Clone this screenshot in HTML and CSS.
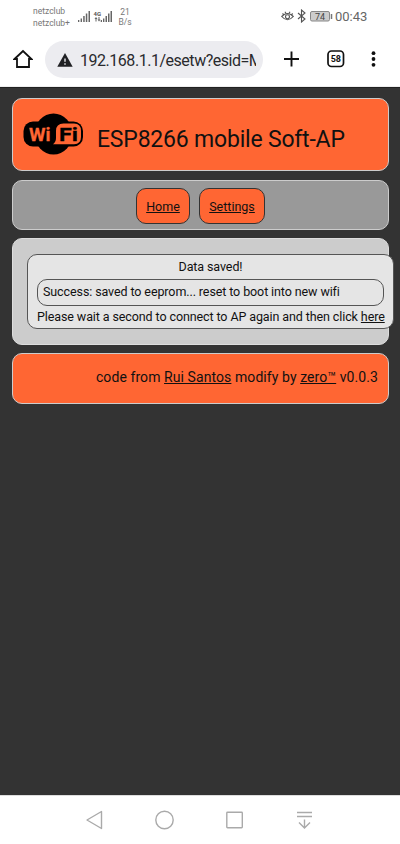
FILE: index.html
```html
<!DOCTYPE html>
<html lang="en">
<head>
<meta charset="utf-8">
<title>ESP8266 mobile Soft-AP</title>
<link rel="stylesheet" href="styles.css">
</head>
<body>
<div class="status">
  <div class="carrier"><span>netzclub</span><span>netzclub+</span></div>
  <svg class="signal" width="36" height="14" viewBox="0 0 36 14">
    <g fill="#666"><path d="M0 11h1.3v2H0zM2.6 9.5h1.4V13H2.6zM5.200 7h1.500v6H5.200zM7.800 4.500h1.500V13H7.800zM10.500 2H12v11h-1.500zM22.700 11H24v2h-1.300zM25 9.500h1.400V13H25zM27.500 7H29v6h-1.500zM30 4.500h1.500V13H30zM32.500 2H34v11h-1.500z"/><path d="M18 8l-1.500 2h1v2.500h1V10h1zM21 12.500l-1.500-2h1V8h1v2.500h1z"/></g>
    <text class="net" x="15.500" y="6.500">4G</text>
  </svg>
  <div class="rate"><span>21</span><span>B/s</span></div>
  <svg class="symbols" width="52" height="14" viewBox="0 0 52 14">
    <g fill="none" stroke="#555" stroke-width="1.100"><path d="M.7 7.500Q6.500 1.500 12.300 7.500Q6.500 14 .7 7.500zM1.500 4.500L3 6M4 2.700L5 4.500M9 2.700L8 4.500M11.700 4.500L10.300 6"/><circle cx="6.500" cy="7.700" r="2"/><path d="M17 4L24 10L20.500 13V1L24 4L17 10"/></g>
    <rect x="29.500" y="2.500" width="19" height="9.500" rx="1.500" fill="#ccc" stroke="#888"/>
    <path d="M50.500 5v5" stroke="#777" stroke-width="1.500"/>
    <text class="charge" x="34" y="10.500">74</text>
  </svg>
  <span class="clock">00:43</span>
</div>
<div class="toolbar">
  <svg class="home" width="20" height="20" viewBox="0 0 20 20"><path d="M1.500 10L10 2L18.500 10H16V18H4V10z" fill="none" stroke="#111" stroke-width="1.800"/></svg>
  <div class="address">
    <svg width="16" height="14" viewBox="0 0 16 14"><path d="M8 0L15.700 13.700H.3z" fill="#202124"/><path d="M8 5.500v3.200M8 10.200v1.600" stroke="#ececf0" stroke-width="1.400"/></svg>
    <span class="url">192.168.1.1/esetw?esid=M</span>
  </div>
  <svg class="actions" width="96" height="20" viewBox="0 0 96 20">
    <path d="M1 10H16M8.500 2.500V17.500" stroke="#111" stroke-width="1.900"/>
    <rect x="45" y="2" width="15.500" height="15.500" rx="3.500" fill="none" stroke="#111" stroke-width="1.700"/>
    <text class="tabs" x="52.800" y="13">58</text>
    <g fill="#111"><circle cx="90.500" cy="4.200" r="1.900"/><circle cx="90.500" cy="10" r="1.900"/><circle cx="90.500" cy="15.800" r="1.900"/></g>
  </svg>
</div>
<main class="page">
  <header class="panel banner">
    <svg class="logo" width="61" height="43" viewBox="0 0 61 43">
      <ellipse cx="30.500" cy="21" rx="19" ry="20.500"/>
      <rect x=".5" y="8.500" width="59.500" height="25" rx="9.500"/>
      <path d="M30 31.300Q33 29 33 25V18Q33 10.500 40.500 10.500H51Q58 10.500 58 18V24Q58 31.300 51 31.300z" fill="#ff6633"/>
      <text class="wi" x="6" y="27.700" textLength="21.500" lengthAdjust="spacingAndGlyphs">Wi</text>
      <text class="fi" x="36" y="28" textLength="19" lengthAdjust="spacingAndGlyphs">Fi</text>
    </svg>
    <h1>ESP8266 mobile Soft-AP</h1>
  </header>
  <nav class="panel menu"><a class="button">Home</a><a class="button settings">Settings</a></nav>
  <section class="panel content">
    <div class="notice">
      <p class="heading">Data saved!</p>
      <p class="result">Success: saved to eeprom... reset to boot into new wifi</p>
      <p class="wait">Please wait a second to connect to AP again and then click <u>here</u></p>
    </div>
  </section>
  <footer class="panel footer">code from <u>Rui Santos</u> modify by <u>zero™</u> v0.0.3</footer>
</main>
<div class="navigation">
  <svg width="230" height="22" viewBox="0 0 230 22"><g fill="none" stroke="#aaa" stroke-width="1.400"><path d="M2 11L16.500 2.500V19.500z" stroke-linejoin="round"/><circle cx="79.500" cy="11" r="8.700"/><rect x="141.800" y="3.300" width="15.500" height="15.500" rx=".7"/><path d="M212 3.500h15M212 7.500h15M219.500 10.500v8.500M214 13.500l5.500 5.500 5.500-5.500"/></g></svg>
</div>
</body>
</html>
```
FILE: styles.css
```css
* { box-sizing: border-box; }
body { margin: 0; width: 400px; height: 844px; overflow: hidden; display: flex; flex-direction: column; background: #fff; font-family: Roboto, sans-serif; color: #111; }
.status { height: 38px; display: flex; align-items: flex-start; color: #777; }
.carrier { width: 45px; margin: 5px 0 0 33px; display: flex; flex-direction: column; font-size: 8.5px; line-height: 12px; white-space: nowrap; }
.signal { margin-top: 9px; }
.net { font: bold 6px Roboto, sans-serif; fill: #555; }
.rate { width: 22px; margin: 7px 0 0 0; display: flex; flex-direction: column; text-align: center; font-size: 8.5px; line-height: 10px; }
.symbols { margin: 9px 0 0 145px; }
.charge { font: 9px Roboto, sans-serif; fill: #444; }
.clock { margin: 8px 0 0 2px; font-size: 13px; line-height: 18px; color: #666; }
.toolbar { height: 49px; padding: 3px 0 9px 13px; display: flex; align-items: center; border-bottom: 1px solid #eee; }
.address { width: 218px; height: 37px; margin-left: 12px; padding: 2px 7px 0 12px; border-radius: 19px; background: #ececf0; display: flex; align-items: center; }
.address svg { flex: none; }
.url { width: 176px; margin-left: 7px; overflow: hidden; white-space: nowrap; font-size: 16px; letter-spacing: -0.47px; color: #292a2d; }
.actions { margin-left: 20px; }
.tabs { font: bold 9px Roboto, sans-serif; text-anchor: middle; fill: #111; }
.page { height: 708px; padding: 10px 11px 0 12px; background: #333; border-top: 1px solid #222; display: flex; flex-direction: column; gap: 9px; }
.panel { border: 1px solid #ccc; border-radius: 10px; flex: none; }
.banner { height: 73px; padding: 14px 10px 0; display: flex; align-items: flex-start; background: #ff6633; }
.banner h1 { margin: 13px 0 0 13px; font-size: 23px; letter-spacing: -0.2px; line-height: 27px; font-weight: 400; white-space: nowrap; color: #111; }
.menu { height: 50px; padding-top: 7px; display: flex; justify-content: center; gap: 9px; background: #999; }
.button { width: 54px; height: 36px; border: 1px solid #333; border-radius: 10px; display: flex; align-items: center; justify-content: center; background: #ff6633; font-size: 12.5px; text-decoration: underline; }
.settings { width: 66px; }
.content { height: 107px; padding: 15px 0 0 14px; background: #ccc; border-color: #ddd; margin-top: -1px; }
.notice { width: 367px; height: 75px; padding: 4px 9px 0; border: 1px solid #555; border-radius: 10px; background: #e5e5e5; font-size: 12.5px; letter-spacing: -0.1px; line-height: 16px; }
.notice p { margin: 0; white-space: nowrap; }
.notice .heading { text-align: center; }
.notice .result { height: 27px; margin: 4px 0 3px; padding: 4px 5px; border: 1px solid #555; border-radius: 10px; }
.footer { height: 51px; padding: 14px 10px 0; background: #ff6633; text-align: right; font-size: 14px; letter-spacing: 0.08px; line-height: 18px; margin-top: -1px; }
.navigation { height: 49px; padding: 13px 0 0 85px; border-top: 1px solid #ddd; }
.wi, .fi { font: bold 18px Roboto, sans-serif; fill: #ff6633; stroke: #ff6633; stroke-width: .3px; }
.fi { font-size: 19px; fill: #000; stroke: #000; }
```
